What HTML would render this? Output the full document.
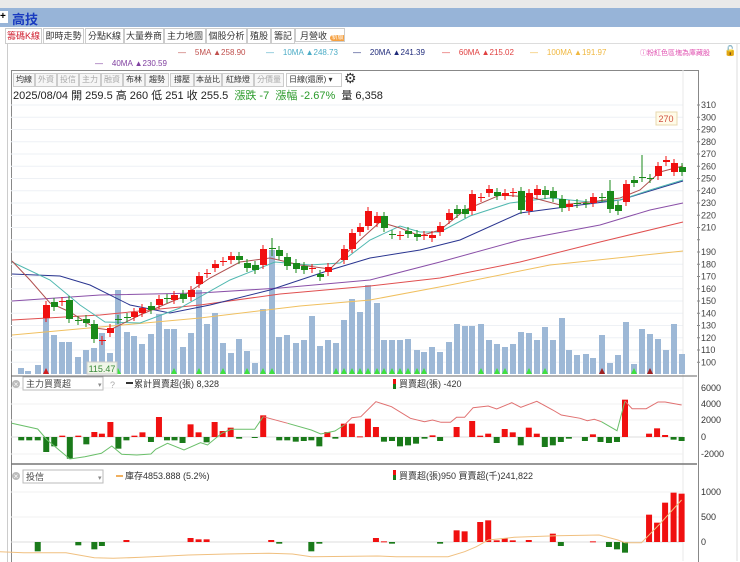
<!DOCTYPE html>
<html><head><meta charset="utf-8"><style>
body{margin:0;width:740px;height:561px;overflow:hidden;background:#fff;font-family:"Liberation Sans","Noto Sans CJK TC",sans-serif;position:relative}
.a{position:absolute;white-space:nowrap}
.tab{position:absolute;top:28px;height:14px;border:1px solid #ccc;font-size:9px;line-height:14px;text-align:center;background:#fff;color:#333;white-space:nowrap;overflow:hidden}
.tb{position:absolute;top:73px;height:12px;border:1px solid #ccc;font-size:8px;line-height:12px;text-align:center;background:#f6f6f6;color:#333;white-space:nowrap;overflow:hidden}
.tb.d{color:#aaa}
.lg{position:absolute;top:48px;font-size:8px;white-space:nowrap}
</style></head><body>
<div class="a" style="left:0;top:0;width:740px;height:8px;background:#e9e9e9"></div>
<div class="a" style="left:0;top:8px;width:740px;height:19px;background:#97b4d8"></div>
<div class="a" style="left:0;top:11px;width:8px;height:12px;background:#fff;font-size:10px;line-height:12px;font-weight:bold">+</div>
<div class="a" style="left:12px;top:9px;font-size:13px;font-weight:bold;color:#1a3cc0">高技</div>
<div class="a" style="left:7px;top:43px;width:733px;height:518px;border-left:1px solid #ccc;border-top:1px solid #ddd"></div>
<div class="tab" style="left:5px;width:35px;color:#d02030">籌碼K線</div>
<div class="tab" style="left:43px;width:39px">即時走勢</div>
<div class="tab" style="left:85px;width:37px">分點K線</div>
<div class="tab" style="left:124px;width:38px">大量券商</div>
<div class="tab" style="left:164px;width:40px">主力地圖</div>
<div class="tab" style="left:206px;width:39px">個股分析</div>
<div class="tab" style="left:247px;width:22px">殖股</div>
<div class="tab" style="left:271px;width:22px">籌記</div>
<div class="tab" style="left:295px;width:50px;text-align:left;padding-left:4px;box-sizing:border-box">月營收 <span style="background:#f5a040;color:#fff;border-radius:6px;font-size:6px;padding:0 2px">新版</span></div>
<div class="lg" style="left:178px;color:#c0504d">—&nbsp;&nbsp;&nbsp;&nbsp;5MA ▲258.90</div>
<div class="lg" style="left:266px;color:#4bacc6">—&nbsp;&nbsp;&nbsp;&nbsp;10MA ▲248.73</div>
<div class="lg" style="left:353px;color:#1f2a7a">—&nbsp;&nbsp;&nbsp;&nbsp;20MA ▲241.39</div>
<div class="lg" style="left:442px;color:#e04040">—&nbsp;&nbsp;&nbsp;&nbsp;60MA ▲215.02</div>
<div class="lg" style="left:530px;color:#f0b840">—&nbsp;&nbsp;&nbsp;&nbsp;100MA ▲191.97</div>
<div class="lg" style="left:640px;color:#e050b0;font-size:7px">ⓘ粉紅色區塊為庫藏股</div>
<div class="a" style="left:724px;top:46px;font-size:10px">🔓</div>
<div class="lg" style="left:95px;top:59px;color:#8040a0">—&nbsp;&nbsp;&nbsp;&nbsp;40MA ▲230.59</div>
<div class="a" style="left:11px;top:70px;width:686px;height:491px;border:1px solid #888;border-bottom:none"></div>
<div class="tb" style="left:13px;width:20px">均線</div>
<div class="tb d" style="left:35px;width:20px">外資</div>
<div class="tb d" style="left:57px;width:20px">投信</div>
<div class="tb d" style="left:79px;width:20px">主力</div>
<div class="tb d" style="left:101px;width:20px">融資</div>
<div class="tb" style="left:123px;width:20px">布林</div>
<div class="tb" style="left:145px;width:22px">趨勢</div>
<div class="tb" style="left:170px;width:22px">撐壓</div>
<div class="tb" style="left:194px;width:26px">本益比</div>
<div class="tb" style="left:222px;width:30px">紅綠燈</div>
<div class="tb d" style="left:254px;width:28px">分價量</div>
<div class="tb" style="left:286px;width:52px;background:#fff;text-align:left;padding-left:2px">日線(還原) ▾</div>
<div class="a" style="left:344px;top:70px;font-size:14px;color:#333">⚙</div>
<div class="a" style="left:13px;top:87px;font-size:11px;color:#222">2025/08/04 開 259.5 高 260 低 251 收 255.5 &nbsp;<span style="color:#2a9a2a">漲跌 -7 &nbsp;漲幅 -2.67%</span> &nbsp;量 6,358</div>
<svg class="a" style="left:0;top:0" width="740" height="561" id="sv"></svg>
<script>
var s='';
function L(x1,y1,x2,y2,c,w){s+='<line x1="'+x1+'" y1="'+y1+'" x2="'+x2+'" y2="'+y2+'" stroke="'+c+'" stroke-width="'+(w||1)+'"/>';}
function R(x,y,w,h,c){if(h<0){y+=h;h=-h;}s+='<rect x="'+x+'" y="'+y+'" width="'+w+'" height="'+Math.max(h,1)+'" fill="'+c+'"/>';}
function T(x,y,t,c,sz,an){s+='<text x="'+x+'" y="'+y+'" fill="'+(c||'#333')+'" font-size="'+(sz||9)+'" text-anchor="'+(an||'start')+'" font-family="Liberation Sans,Noto Sans CJK TC,sans-serif">'+t+'</text>';}
function P(pts,c,w){s+='<polyline fill="none" stroke="'+c+'" stroke-width="'+(w||1)+'" points="'+pts.map(function(p){return p.join(',')}).join(' ')+'"/>';}
for(var p=100;p<=310;p+=10){var y=105+(310-p)*1.225;L(11,y,683,y,'#eef1f5');if(p!=200)T(701,y+3,p,'#444',9);L(697,y,700,y,'#888');}
L(683,70,683,561,'#e8e8e8');
var vol=[[21,368],[28,371],[38,365],[46,318],[54,335],[62,342],[69,342],[78,357],[86,350],[94,348],[102,333],[110,353],[118,290],[127,332],[134,336],[142,344],[151,334],[159,314],[167,329],[174,329],[183,347],[191,333],[199,290],[207,324],[215,313],[223,343],[231,353],[239,339],[247,351],[255,363],[263,309],[272,250],[279,337],[287,335],[296,343],[304,340],[312,316],[320,346],[328,340],[336,343],[344,320],[352,299],[360,312],[368,285],[377,303],[384,340],[392,340],[400,340],[408,339],[417,350],[424,352],[432,347],[440,352],[449,342],[457,324],[465,326],[472,326],[481,324],[489,340],[497,344],[505,347],[513,344],[521,332],[529,333],[537,340],[545,327],[553,340],[562,318],[569,350],[577,355],[586,354],[593,358],[602,335],[610,363],[618,355],[626,322],[634,364],[642,329],[650,334],[658,339],[666,350],[674,324],[682,354]];
vol.forEach(function(v){R(v[0]-3,v[1],6,374-v[1],'#9db8d6');});
[46,118,174,199,223,247,263,272,336,344,352,360,368,377,384,392,400,408,417,424,481,497,505,529,545,634].forEach(function(x,i){s+='<polygon points="'+(x-3)+',374 '+(x+3)+',374 '+x+',368" fill="'+(i==0?'#d02020':'#40e040')+'"/>';});
[102,602,650].forEach(function(x){s+='<polygon points="'+(x-3)+',374 '+(x+3)+',374 '+x+',368" fill="#a02020"/>';});
P([[12,301],[100,295],[200,293],[280,288],[370,280],[440,262],[520,240],[600,225],[650,210],[683,203]],'#8a50a8');
P([[12,320],[100,315],[200,305],[280,294],[370,286],[440,278],[520,262],[600,242],[683,222]],'#e05050');
P([[12,335],[100,327],[200,318],[300,306],[370,300],[450,285],[550,265],[683,251]],'#f0c060');
P([[12,274],[60,276],[90,285],[130,305],[170,313],[210,305],[270,290],[330,270],[370,258],[420,250],[460,240],[520,213],[580,205],[620,200],[683,181]],'#2a3590');
P([[12,262],[50,280],[80,305],[105,322],[140,323],[180,308],[230,280],[275,262],[310,265],[340,263],[370,240],[400,226],[420,232],[440,232],[470,216],[510,203],[550,198],[590,202],[620,200],[650,190],[683,180]],'#50b8b0');
P([[12,261],[30,280],[50,303],[70,312],[95,328],[110,330],[140,315],[180,298],[210,278],[240,262],[270,258],[300,265],[330,269],[360,240],[380,222],[400,228],[420,236],[440,230],[465,210],[500,195],[530,197],[560,205],[590,202],[620,198],[640,190],[660,172],[683,166]],'#b05050');
var c=[[46,305,318,1],[54,302,307,0],[62,301,302,1],[69,300,319,0],[78,320,321,0],[86,319,323,0],[94,324,339,0],[102,340,341,1],[110,328,333,1],[118,319,320,0],[127,317,318,0],[134,312,317,1],[142,308,313,1],[151,306,310,0],[159,299,305,1],[167,298,299,0],[174,295,300,1],[183,294,299,0],[191,290,297,1],[199,276,284,1],[207,273,274,1],[215,264,268,1],[223,261,262,1],[231,256,260,1],[239,256,260,0],[247,263,268,0],[255,265,270,0],[263,249,265,1],[272,248,249,0],[279,250,256,0],[287,257,266,0],[296,263,269,0],[304,266,270,0],[312,268,269,1],[320,274,277,0],[328,267,272,1],[344,249,260,1],[352,233,249,1],[360,227,232,1],[368,211,226,1],[377,216,223,1],[384,216,228,0],[392,234,235,0],[400,235,236,1],[408,231,234,0],[417,234,237,0],[424,235,236,1],[432,235,238,1],[440,226,232,1],[449,213,220,1],[457,209,214,0],[465,209,214,0],[472,194,211,1],[481,197,198,1],[489,189,193,1],[497,192,196,0],[505,193,196,1],[513,192,193,1],[521,191,210,0],[529,193,211,1],[537,189,195,1],[545,190,195,0],[553,191,198,0],[562,199,208,0],[569,204,207,1],[577,203,204,0],[586,203,204,0],[593,197,203,1],[602,197,198,0],[610,191,209,0],[618,205,211,0],[626,184,202,1],[634,180,183,0],[642,177,178,0],[650,178,179,0],[658,166,176,1],[666,160,162,1],[674,163,172,1],[682,167,172,0]];
c.forEach(function(k){var col=k[3]?'#f01010':'#1a8a1a';L(k[0],k[1]-4,k[0],k[2]+4,col);R(k[0]-3,k[1],7,k[2]-k[1],col);});
L(642,155,642,178,'#1a8a1a');L(610,180,610,209,'#1a8a1a');L(272,238,272,256,'#1a8a1a');
s+='<rect x="656" y="112" width="21" height="13" fill="#fffbe8" stroke="#e8d8b0"/>';T(666,122,'270','#d05040',9,'middle');
s+='<rect x="87" y="362" width="30" height="12" fill="#f0f6e8" stroke="#ccc"/>';T(102,372,'115.47','#3a8a3a',9,'middle');
L(11,376,697,376,'#666');
[388,404,420,437,454].forEach(function(y,i){L(11,y,683,y,i==3?'#ddd':'#f0f0f0');T(701,y+3,['6000','4000','2000','0','-2000'][i],'#333',9);});
L(11,464,697,464,'#777',1.5);
var b1=[[45,-10],[62,-10],[80,-10],[98,-45],[115,-28],[132,4],[148,-65],[166,4],[183,-22],[200,15],[216,10],[234,45],[251,-35],[268,-10],[285,4],[302,14],[320,-15],[337,60],[354,-10],[370,-10],[387,-18],[404,38],[421,14],[438,-16],[455,45],[472,18],[489,28],[507,-5],[540,-2],[558,65],[592,-10],[609,-10],[627,-14],[644,-12],[660,-10],[677,-28],[694,15],[711,-5],[729,40],[746,40],[763,2],[780,55],[797,30],[814,-14],[831,-12],[848,-28],[865,-25],[882,-20],[900,-5],[917,5],[933,-12],[968,30],[1001,48],[1018,4],[1035,10],[1053,-18],[1070,24],[1087,14],[1104,-25],[1121,28],[1138,10],[1155,-30],[1172,-25],[1189,-15],[1206,-5],[1240,-12],[1257,8],[1273,-15],[1291,-18],[1308,-15],[1325,112],[1376,10],[1393,26],[1410,6],[1428,-8],[1445,-12]];
b1.forEach(function(b){var x=b[0]/2.12;R(x-3,437,6,-b[1]/3,b[1]>0?'#f01010':'#1a7a1a');});
var ln=[[25,190],[80,207],[100,240],[148,297],[180,290],[215,280],[237,258],[258,283],[290,285],[320,282],[330,268],[355,250],[390,270],[425,248],[440,255],[470,220],[490,208],[540,208],[558,170],[610,190],[660,210],[680,222],[710,213],[730,195],[746,173],[765,170],[797,125],[830,140],[870,175],[900,185],[917,180],[935,187],[955,187],[968,172],[985,172],[1003,143],[1035,138],[1053,147],[1085,128],[1104,142],[1138,124],[1172,150],[1190,165],[1230,175],[1245,182],[1260,178],[1275,185],[1308,212],[1325,123],[1340,146],[1370,146],[1395,126],[1410,126],[1445,135]];
var pts=ln.map(function(p){return [(p[0]/2.12).toFixed(1),(360+p[1]/3).toFixed(1)];});
P(pts.slice(0,19),'#6abf6a');P(pts.slice(18,20),'#e07070');P(pts.slice(19,24),'#6abf6a');P(pts.slice(23,47),'#e07070');P(pts.slice(46,49),'#6abf6a');P(pts.slice(48),'#e07070');
s+='<circle cx="16" cy="384" r="4" fill="#bbb"/>';T(16,387,'×','#fff',8,'middle');
s+='<rect x="23" y="377" width="80" height="13" fill="#fff" stroke="#bbb"/>';T(26,387,'主力買賣超','#444',9);T(98,387,'▾','#888',7);T(110,388,'?','#aaa',9);
L(126,383,133,383,'#333',2);T(134,387,'累計買賣超(張) 8,328','#333',9);
R(393,379,3,5,'#f01010');R(393,384,3,5,'#1a7a1a');T(399,387,'買賣超(張) -420','#333',9);
[492,517,542].forEach(function(y,i){L(11,y,683,y,i==2?'#ddd':'#f0f0f0');T(701,y+3,['1000','500','0'][i],'#333',9);});
var b2=[[80,-28],[166,-10],[200,-22],[216,-12],[268,6],[404,12],[421,8],[438,8],[575,6],[592,-5],[660,-28],[677,-5],[797,12],[814,2],[831,-5],[933,-5],[968,35],[985,32],[1018,60],[1035,65],[1053,5],[1070,12],[1087,5],[1121,6],[1172,25],[1189,-12],[1257,2],[1291,-15],[1308,-22],[1325,-32],[1376,82],[1393,58],[1410,118],[1428,148],[1445,145]];
b2.forEach(function(b){var x=b[0]/2.12;R(x-3,542,6,-b[1]/3,b[1]>0?'#f01010':'#1a7a1a');});
var o=[[0,575],[50,578],[140,578],[200,593],[240,595],[300,592],[400,585],[480,582],[570,580],[620,582],[660,590],[800,588],[840,590],[950,590],[985,575],[1010,560],[1035,540],[1090,532],[1180,527],[1270,525],[1310,540],[1325,548],[1360,548],[1400,490],[1445,420]];
P(o.map(function(p){return [(p[0]/2.12).toFixed(1),(360+p[1]/3).toFixed(1)];}),'#f0c080');
s+='<circle cx="16" cy="476" r="4" fill="#bbb"/>';T(16,479,'×','#fff',8,'middle');
s+='<rect x="23" y="470" width="80" height="13" fill="#fff" stroke="#bbb"/>';T(26,480,'投信','#444',9);T(98,480,'▾','#888',7);
L(116,476,123,476,'#f0b060',2);T(125,479,'庫存4853.888 (5.2%)','#333',9);
R(393,470,3,5,'#f01010');R(393,475,3,5,'#1a7a1a');T(399,479,'買賣超(張)950 買賣超(千)241,822','#333',9);
L(737,43,737,561,'#ddd');
document.getElementById('sv').innerHTML=s;
</script>
</body></html>
